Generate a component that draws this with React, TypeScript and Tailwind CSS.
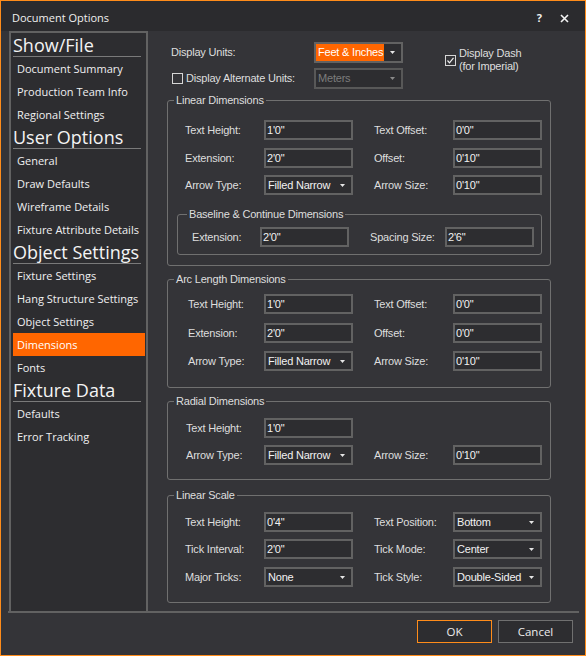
import React from 'react';

const nav = [
  { title: 'Show/File', items: ['Document Summary', 'Production Team Info', 'Regional Settings'] },
  { title: 'User Options', items: ['General', 'Draw Defaults', 'Wireframe Details', 'Fixture Attribute Details'] },
  { title: 'Object Settings', items: ['Fixture Settings', 'Hang Structure Settings', 'Object Settings', 'Dimensions', 'Fonts'] },
  { title: 'Fixture Data', items: ['Defaults', 'Error Tracking'] },
];

function Arrow({ dim }: { dim?: boolean }) {
  return (
    <svg width="5" height="3" viewBox="0 0 5 3" className={dim ? 'text-[#8a8a8a]' : 'text-[#e6e6e6]'}>
      <path d="M0 0H5L2.5 3Z" fill="currentColor" />
    </svg>
  );
}

function Field({ value }: { value: string }) {
  return (
    <div className="w-[89px] h-[20px] shrink-0 border-2 border-[#626262] bg-[#2d2d30] pl-[1px] leading-[16px] text-[#f2f2f2]">
      {value}
    </div>
  );
}

function Select({ value }: { value: string }) {
  return (
    <div className="w-[89px] h-[20px] shrink-0 flex border-2 border-[#626262] bg-[#2d2d30] text-[#f2f2f2]">
      <div className="flex-1 pl-[2px] leading-[16px] whitespace-nowrap">{value}</div>
      <div className="w-[17px] flex items-center justify-center">
        <Arrow />
      </div>
    </div>
  );
}

function Check({ checked }: { checked?: boolean }) {
  return (
    <div className="w-[11px] h-[11px] shrink-0 border border-[#d6d6d6]">
      {checked && (
        <svg width="9" height="9" viewBox="0 0 9 9">
          <path d="M1.5 4.5L3.5 6.8L7.5 1.8" fill="none" stroke="#f0f0f0" strokeWidth="1.2" />
        </svg>
      )}
    </div>
  );
}

function Group({ title, className, children }: { title: string; className: string; children: React.ReactNode }) {
  return (
    <div className={`relative w-[384px] border border-[#707070] rounded-[3px] ${className}`}>
      <span className="absolute -top-[8px] left-[6px] px-[2px] leading-[14px] bg-[#343438]">{title}</span>
      {children}
    </div>
  );
}

function Row({
  pad,
  className = '',
  label,
  field,
  label2,
  field2,
}: {
  pad: string;
  className?: string;
  label: string;
  field: React.ReactNode;
  label2?: string;
  field2?: React.ReactNode;
}) {
  return (
    <div className={`flex items-center h-[20px] ${className}`}>
      <div className={`w-[96px] shrink-0 whitespace-nowrap ${pad}`}>{label}</div>
      {field}
      {label2 && (
        <>
          <div className="w-[100px] shrink-0 pl-[21px] whitespace-nowrap">{label2}</div>
          {field2}
        </>
      )}
    </div>
  );
}

export default function App() {
  return (
    <div className="w-[586px] h-[656px] border border-[#ff8c1a] bg-[#343438] flex flex-col font-['Open_Sans','Noto_Sans',sans-serif] text-[#f0f0f0] overflow-hidden">
      {/* Title bar */}
      <div className="h-[30px] shrink-0 bg-[#2b2b2e] flex items-center pt-[5px] pl-[11px] pr-[16px] text-[11px]">
        <span className="flex-1">Document Options</span>
        <span className="font-bold text-[11px] mr-[18px]">?</span>
        <svg width="9" height="9" viewBox="0 0 9 9">
          <path d="M1 1L8 8M8 1L1 8" stroke="#f4f4f4" strokeWidth="1.6" />
        </svg>
      </div>

      {/* Body */}
      <div className="h-[580px] shrink-0 flex">
        <div className="ml-[8px] w-[139px] shrink-0 border-t-2 border-l-2 border-r-2 border-[#626262] bg-[#2d2d30] pt-[1px] pl-[2px]">
          {nav.map((section) => (
            <div key={section.title}>
              <div className="h-[23px] mr-[5px] border-b border-[#7a7a7a] text-[18px] leading-[22px] text-[#f4f4f4] whitespace-nowrap">
                {section.title}
              </div>
              {section.items.map((item) => (
                <div
                  key={item}
                  className={`h-[23px] mr-[1px] pl-[4px] text-[11px] leading-[23px] whitespace-nowrap ${
                    item === 'Dimensions' ? 'bg-[#ff6600] text-white' : 'text-[#f0f0f0]'
                  }`}
                >
                  {item}
                </div>
              ))}
            </div>
          ))}
        </div>

        <div className="flex-1 pl-[19px] font-['Liberation_Sans',Arial,sans-serif] text-[11px] tracking-[-0.2px] text-[#dedede]">
          {/* Units */}
          <div className="flex">
            <div className="pt-[11px]">
              <div className="flex items-center h-[21px]">
                <div className="w-[147px] pl-[4px]">Display Units:</div>
                <div className="w-[89px] h-[21px] flex border-2 border-[#626262] bg-[#2d2d30]">
                  <div className="w-[68px] bg-[#ff6600] text-white pl-[2px] leading-[17px] whitespace-nowrap">Feet &amp; Inches</div>
                  <div className="flex-1 flex items-center justify-center">
                    <Arrow />
                  </div>
                </div>
              </div>
              <div className="flex items-center h-[21px] mt-[5px]">
                <div className="w-[147px] pl-[5px] flex items-center">
                  <Check />
                  <span className="ml-[3px]">Display Alternate Units:</span>
                </div>
                <div className="w-[89px] h-[21px] flex border-2 border-[#585858] bg-[#2d2d30] text-[#7c7c7c]">
                  <div className="flex-1 pl-[2px] leading-[17px]">Meters</div>
                  <div className="w-[17px] flex items-center justify-center">
                    <Arrow dim />
                  </div>
                </div>
              </div>
            </div>
            <div className="ml-[42px] mt-[16px] flex items-center h-[26px]">
              <Check checked />
              <div className="ml-[3px] leading-[13px]">
                <div>Display Dash</div>
                <div>(for Imperial)</div>
              </div>
            </div>
          </div>

          {/* Linear Dimensions */}
          <Group title="Linear Dimensions" className="mt-[11px] pt-[19px] pb-[10px]">
            <Row pad="pl-[17px]" label="Text Height:" field={<Field value={`1'0"`} />} label2="Text Offset:" field2={<Field value={`0'0"`} />} />
            <Row pad="pl-[17px]" className="mt-[8px]" label="Extension:" field={<Field value={`2'0"`} />} label2="Offset:" field2={<Field value={`0'10"`} />} />
            <Row pad="pl-[17px]" className="mt-[7px]" label="Arrow Type:" field={<Select value="Filled Narrow" />} label2="Arrow Size:" field2={<Field value={`0'10"`} />} />
            <div className="relative ml-[9px] mt-[19px] w-[365px] border border-[#707070] rounded-[3px] pt-[12px] pb-[7px]">
              <span className="absolute -top-[8px] left-[9px] px-[2px] leading-[14px] bg-[#343438]">Baseline &amp; Continue Dimensions</span>
              <div className="flex items-center h-[20px]">
                <div className="w-[82px] shrink-0 pl-[14px]">Extension:</div>
                <Field value={`2'0"`} />
                <div className="w-[96px] shrink-0 pl-[21px] whitespace-nowrap">Spacing Size:</div>
                <Field value={`2'6"`} />
              </div>
            </div>
          </Group>

          {/* Arc Length Dimensions */}
          <Group title="Arc Length Dimensions" className="mt-[13px] pt-[14px] pb-[16px]">
            <Row pad="pl-[20px]" label="Text Height:" field={<Field value={`1'0"`} />} label2="Text Offset:" field2={<Field value={`0'0"`} />} />
            <Row pad="pl-[20px]" className="mt-[9px]" label="Extension:" field={<Field value={`2'0"`} />} label2="Offset:" field2={<Field value={`0'0"`} />} />
            <Row pad="pl-[20px]" className="mt-[8px]" label="Arrow Type:" field={<Select value="Filled Narrow" />} label2="Arrow Size:" field2={<Field value={`0'10"`} />} />
          </Group>

          {/* Radial Dimensions */}
          <Group title="Radial Dimensions" className="mt-[13px] pt-[16px] pb-[14px]">
            <Row pad="pl-[18px]" label="Text Height:" field={<Field value={`1'0"`} />} />
            <Row pad="pl-[18px]" className="mt-[7px]" label="Arrow Type:" field={<Select value="Filled Narrow" />} label2="Arrow Size:" field2={<Field value={`0'10"`} />} />
          </Group>

          {/* Linear Scale */}
          <Group title="Linear Scale" className="mt-[15px] pt-[16px] pb-[15px]">
            <Row pad="pl-[17px]" label="Text Height:" field={<Field value={`0'4"`} />} label2="Text Position:" field2={<Select value="Bottom" />} />
            <Row pad="pl-[17px]" className="mt-[7px]" label="Tick Interval:" field={<Field value={`2'0"`} />} label2="Tick Mode:" field2={<Select value="Center" />} />
            <Row pad="pl-[17px]" className="mt-[8px]" label="Major Ticks:" field={<Select value="None" />} label2="Tick Style:" field2={<Select value="Double-Sided" />} />
          </Group>
        </div>
      </div>

      {/* Footer */}
      <div className="ml-[7px] mr-[6px] border-t-2 border-[#626262] pt-[7px] pb-[12px] pr-[6px] flex justify-end gap-[6px] text-[11.5px] text-[#ececec]">
        <button className="w-[75px] h-[23px] border border-[#ff8c1a] bg-[#2d2d30] flex items-center justify-center">OK</button>
        <button className="w-[75px] h-[23px] border border-[#707070] bg-[#2d2d30] flex items-center justify-center">Cancel</button>
      </div>
    </div>
  );
}
